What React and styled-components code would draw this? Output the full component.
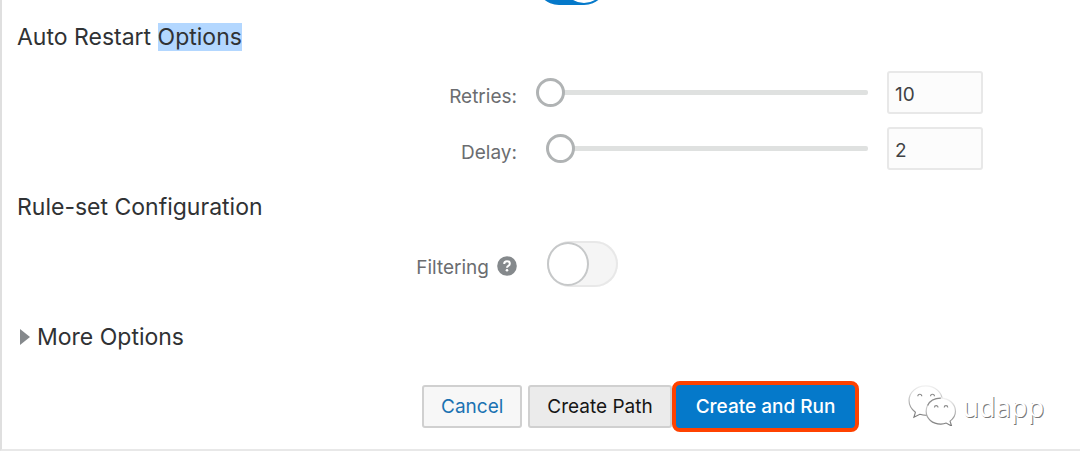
import React, { useState } from 'react';
import styled, { createGlobalStyle } from 'styled-components';

const GlobalStyle = createGlobalStyle`
  *,
  *::before {
    box-sizing: border-box;
  }

  body {
    margin: 0;
    background: #fff;
    color: #303234;
    font-family: Inter, 'Liberation Sans', sans-serif;
    font-size: 19px;
  }
`

const Panel = styled.main`
  position: relative;
  padding: 0 0 17px 15px;
  border-left: 2px solid #dfdfdf;
  border-bottom: 2px solid #e8e8e8;
  overflow: hidden;
`

const Heading = styled.h2`
  margin: 0;
  font-size: 23px;
  font-weight: 400;
  line-height: 28px;

  mark {
    display: inline-block;
    background: #b3d7ff;
    color: inherit;
  }
`

const Section = styled.section`
  margin-bottom: ${props => (props.$last ? '36px' : '23px')};
`

const Fields = styled.div`
  display: flex;
  flex-direction: column;
  gap: 13px;
  padding-top: 20px;
`

const Row = styled.div`
  display: grid;
  grid-template-columns: 500px 1fr 96px;
  column-gap: 19px;
  align-items: center;
  padding-right: 97px;
`

// only the lower edge of this row stays in view
const ScrolledRow = styled(Row)`
  grid-template-rows: 5px;
  align-items: end;
  margin-bottom: 18px;
`

const Label = styled.label`
  display: flex;
  justify-content: flex-end;
  align-items: flex-start;
  gap: 8px;
  padding-top: 8px;
  color: #6b6d70;
  line-height: 24px;
`

const Slider = styled.input`
  appearance: none;
  width: 100%;
  height: 30px;
  margin: 0;
  background: transparent;

  &::-webkit-slider-runnable-track {
    height: 5px;
    border-radius: 2px;
    background: linear-gradient(to right, transparent 24px, #dfe1e0 24px);
  }

  &::-webkit-slider-thumb {
    appearance: none;
    width: 29px;
    height: 29px;
    margin-top: -12px;
    border: 3px solid #b0b3b4;
    border-radius: 50%;
    background: #fff;
  }
`

const NumberBox = styled.input`
  width: 100%;
  height: 43px;
  padding: 4px 6px 0;
  border: 2px solid #e8e8e8;
  border-radius: 3px;
  background: #fcfcfc;
  color: #404244;
  font: inherit;
`

const Switch = styled.input`
  appearance: none;
  display: flex;
  align-items: center;
  width: 71px;
  height: 46px;
  margin: 0 0 0 ${props => (props.$inset ? '11px' : '0')};
  border-radius: 23px;
  background: #f5f5f5;
  box-shadow: inset 0 0 0 2px #e8e8e8;

  &::before {
    content: '';
    width: 42px;
    height: 44px;
    border: 2px solid #c6c8c9;
    border-radius: 50%;
    background: #fff;
  }

  &:checked {
    justify-content: flex-end;
    padding-right: 2px;
    background: #0579ca;
    box-shadow: none;
  }

  &:checked::before {
    height: 42px;
    border-color: #fff;
  }
`

const Expander = styled.button`
  display: flex;
  align-items: center;
  gap: 7px;
  padding: 0 0 0 3px;
  border: 0;
  background: none;
  color: inherit;
  font: inherit;
  font-size: 23px;
  line-height: 28px;
`

const Actions = styled.div`
  display: flex;
  align-items: center;
  padding-left: 405px;
  margin-top: 30px;
`

const Button = styled.button`
  height: 43px;
  padding: 0 17px;
  border: 2px solid #d0d0d0;
  border-radius: 3px;
  background: #f7f7f7;
  color: #1b72b2;
  font: inherit;
  white-space: nowrap;
`

const CreateButton = styled(Button)`
  margin-left: 6px;
  background: #ebebeb;
  color: #161616;
`

const RunButton = styled(Button)`
  height: 51px;
  padding: 0 20px;
  border: 4px solid #ff4200;
  border-radius: 8px;
  background: #0579ca;
  color: #fff;
  font-weight: 500;
`

const Watermark = styled.div`
  position: absolute;
  right: 36px;
  bottom: 20px;
  display: flex;
  align-items: center;
  gap: 5px;
  color: #fff;
  font-family: 'Noto Sans', sans-serif;
  font-size: 27px;
  line-height: 44px;
  text-shadow: 1px 1px 0 #777;

  svg {
    margin-bottom: 3px;
  }
`

const HelpIcon = () => (
  <svg width="20" height="20" viewBox="0 0 20 20" role="img" aria-label="Help">
    <circle cx="10" cy="10" r="9.8" fill="#85898c" />
    <path d="M7.2 8Q7.2 5.3 10 5.3Q12.8 5.3 12.8 7.7Q12.8 9 11.3 9.8Q10 10.5 10 11.8" fill="none" stroke="#fff" strokeWidth="2" />
    <circle cx="10" cy="14.2" r="1.3" fill="#fff" />
  </svg>
)

const WechatIcon = () => (
  <svg width="49" height="42" viewBox="0 0 50 43" fill="#fff" stroke="url(#edge)" strokeWidth="1.2" aria-hidden="true">
    <defs>
      <linearGradient id="edge" x1="0" y1="0" x2="0" y2="1">
        <stop offset="0" stopColor="#f1f1f1" />
        <stop offset="0.4" stopColor="#c4c4c4" />
        <stop offset="1" stopColor="#777" />
      </linearGradient>
    </defs>
    <path d="M18 2C8.500 2 1 8.500 1 17c0 5 2.500 9 6.500 12L6 34l6-3c2 .6 4 1 6.500 1C28 32 35 25.500 35 17S27.500 2 18 2z" />
    <path d="M33.500 14.500C25 14.500 18.500 20.500 18.500 28S25 41 33.500 41c2 0 4-.3 5.500-1l5.500 3-1.500-5c3.500-2.500 5.500-6 5.500-10 0-7.500-6.500-13.500-15-13.500z" />
    <g stroke="#8a8a8a">
      <path d="M10 12.500a2 2 0 0 1 4 0M23 12.500a2 2 0 0 1 4 0" />
      <path d="M27 24a1.800 1.800 0 0 1 3.600 0M37 24a1.800 1.800 0 0 1 3.600 0" />
      <path d="M20 22C22 17.500 27 14.500 33.500 14.500" fill="none" />
    </g>
  </svg>
)

const App = () => {
  const [retries, setRetries] = useState(10)
  const [delay, setDelay] = useState(2)

  return (
    <>
      <GlobalStyle />
      <Panel>
        <ScrolledRow>
          <span />
          <Switch type="checkbox" role="switch" aria-label="Auto Restart" defaultChecked />
        </ScrolledRow>
        <Section>
          <Heading>Auto Restart <mark>Options</mark></Heading>
          <Fields>
            <Row>
              <Label htmlFor="retries">Retries:</Label>
              <Slider type="range" min="10" max="100" value={retries} aria-label="Retries slider" onChange={e => setRetries(e.target.value)} />
              <NumberBox id="retries" value={retries} onChange={e => setRetries(e.target.value)} />
            </Row>
            <Row>
              <Label htmlFor="delay">Delay:</Label>
              <Slider type="range" min="0" max="60" value={delay} aria-label="Delay slider" onChange={e => setDelay(e.target.value)} />
              <NumberBox id="delay" value={delay} onChange={e => setDelay(e.target.value)} />
            </Row>
          </Fields>
        </Section>
        <Section $last>
          <Heading>Rule-set Configuration</Heading>
          <Fields>
            <Row>
              <Label htmlFor="filtering">Filtering <HelpIcon /></Label>
              <Switch id="filtering" type="checkbox" role="switch" $inset />
            </Row>
          </Fields>
        </Section>
        <Expander type="button">
          <svg width="10" height="16" viewBox="0 0 10 16" aria-hidden="true">
            <path d="M0 0L10 8L0 16z" fill="#85898c" />
          </svg>
          More Options
        </Expander>
        <Actions>
          <Button type="button">Cancel</Button>
          <CreateButton type="button">Create Path</CreateButton>
          <RunButton type="button">Create and Run</RunButton>
        </Actions>
        <Watermark><WechatIcon />udapp</Watermark>
      </Panel>
    </>
  )
}

export default App
